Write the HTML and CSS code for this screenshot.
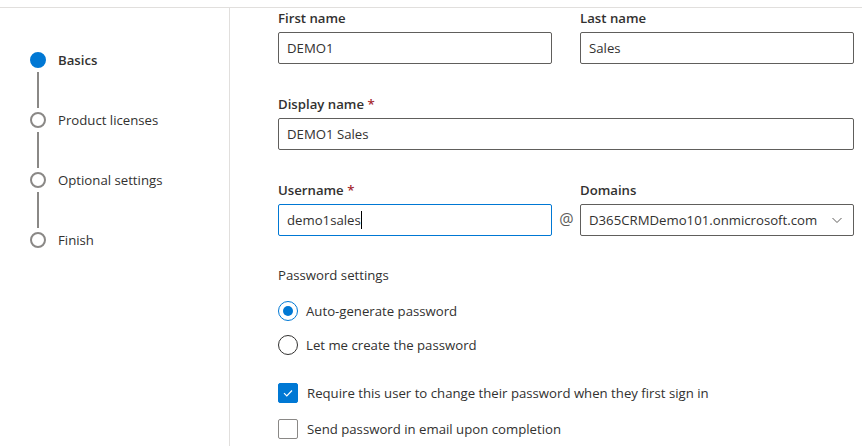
FILE: index.html
```html
<!DOCTYPE html>
<html lang="en">
<head>
  <meta charset="UTF-8">
  <meta name="viewport" content="width=device-width, initial-scale=1.0">
  <title>Add a user - Basics</title>
  <link rel="stylesheet" href="styles.css">
</head>
<body>
  <div class="page">
    <nav class="steps">
      <div class="step active"><span class="dot"></span><span>Basics</span></div>
      <div class="connector"></div>
      <div class="step"><span class="dot"></span><span>Product licenses</span></div>
      <div class="connector"></div>
      <div class="step"><span class="dot"></span><span>Optional settings</span></div>
      <div class="connector"></div>
      <div class="step"><span class="dot"></span><span>Finish</span></div>
    </nav>

    <main class="form">
      <div class="row two">
        <div class="field">
          <label>First name</label>
          <div class="input">DEMO1</div>
        </div>
        <div class="field">
          <label>Last name</label>
          <div class="input">Sales</div>
        </div>
      </div>

      <div class="row">
        <div class="field">
          <label>Display name <span class="req">*</span></label>
          <div class="input">DEMO1 Sales</div>
        </div>
      </div>

      <div class="row user">
        <div class="field">
          <label>Username <span class="req">*</span></label>
          <div class="input focused">demo1sales<span class="caret"></span></div>
        </div>
        <div class="at">@</div>
        <div class="field">
          <label>Domains</label>
          <div class="input dropdown">
            <span>D365CRMDemo101.onmicrosoft.com</span>
            <svg width="12" height="12" viewBox="0 0 12 12"><path d="M1.5 4 L6 8.5 L10.5 4" fill="none" stroke="#605e5c" stroke-width="1"/></svg>
          </div>
        </div>
      </div>

      <div class="group-title">Password settings</div>
      <div class="radios">
        <div class="radio checked"><span class="ring"></span><span>Auto-generate password</span></div>
        <div class="radio"><span class="ring"></span><span>Let me create the password</span></div>
      </div>

      <div class="checks">
        <div class="check checked">
          <span class="box"><svg width="12" height="12" viewBox="0 0 12 12"><path d="M2 6.2 L4.8 9 L10 3.5" fill="none" stroke="#fff" stroke-width="1.2"/></svg></span>
          <span>Require this user to change their password when they first sign in</span>
        </div>
        <div class="check">
          <span class="box"></span>
          <span>Send password in email upon completion</span>
        </div>
      </div>
    </main>
  </div>
</body>
</html>
```
FILE: styles.css
```css
:root {
  --blue: #0078d4;
  --text: #323130;
  --muted: #605e5c;
  --line: #e1dfdd;
  --gray: #8a8886;
}
* { box-sizing: border-box; margin: 0; padding: 0; }
body {
  font-family: 'Open Sans', sans-serif;
  font-size: 13.2px;
  line-height: 20px;
  color: var(--text);
  background: #fff;
}
.page {
  display: flex;
  margin-top: 7px;
  border-top: 1px solid var(--line);
  height: 439px;
  overflow: hidden;
}

/* stepper */
.steps {
  width: 230px;
  flex: none;
  border-right: 1px solid var(--line);
  padding: 42px 0 0 30px;
}
.step {
  display: flex;
  align-items: center;
  gap: 12px;
  height: 20px;
}
.step .dot {
  width: 16px;
  height: 16px;
  border-radius: 50%;
  border: 2px solid var(--gray);
}
.step.active .dot {
  background: var(--blue);
  border-color: var(--blue);
}
.step.active { font-weight: 600; }
.connector {
  width: 2px;
  height: 36px;
  margin: 2px 0 2px 7px;
  background: var(--gray);
}

/* form */
.form {
  flex: 1;
  padding: 0 8px 0 48px;
}
.row { margin-bottom: 30px; }
.row.two {
  display: grid;
  grid-template-columns: 1fr 1fr;
  column-gap: 28px;
}
.row.user {
  display: grid;
  grid-template-columns: 1fr 28px 1fr;
  margin-bottom: 29px;
}
.field label {
  display: block;
  font-weight: 600;
  padding-bottom: 4px;
}
.req { color: #a4262c; }
.input {
  height: 32px;
  border: 1px solid var(--muted);
  border-radius: 2px;
  padding: 0 8px;
  display: flex;
  align-items: center;
}
.input.focused {
  border-color: var(--blue);
}
.caret {
  width: 1px;
  height: 18px;
  background: #000;
}
.at {
  align-self: end;
  height: 32px;
  line-height: 31px;
  font-size: 16px;
  text-align: center;
  color: var(--muted);
  padding-left: 1px;
}
.dropdown { justify-content: space-between; padding-right: 10px; }

.group-title { margin-bottom: 16px; }
.radios {
  display: flex;
  flex-direction: column;
  gap: 14px;
  margin-bottom: 28px;
}
.radio, .check {
  display: flex;
  align-items: center;
  gap: 8px;
  height: 20px;
}
.radio .ring {
  width: 20px;
  height: 20px;
  border-radius: 50%;
  border: 1px solid var(--text);
  position: relative;
}
.radio.checked .ring { border-color: var(--blue); }
.radio.checked .ring::after {
  content: '';
  position: absolute;
  left: 4px;
  top: 4px;
  width: 10px;
  height: 10px;
  border-radius: 50%;
  background: var(--blue);
}
.checks {
  display: flex;
  flex-direction: column;
  gap: 16px;
}
.check { gap: 9px; }
.check .box {
  width: 20px;
  height: 20px;
  border: 1px solid var(--gray);
  border-radius: 2px;
  display: flex;
  align-items: center;
  justify-content: center;
}
.check.checked .box {
  background: var(--blue);
  border-color: var(--blue);
}
```
